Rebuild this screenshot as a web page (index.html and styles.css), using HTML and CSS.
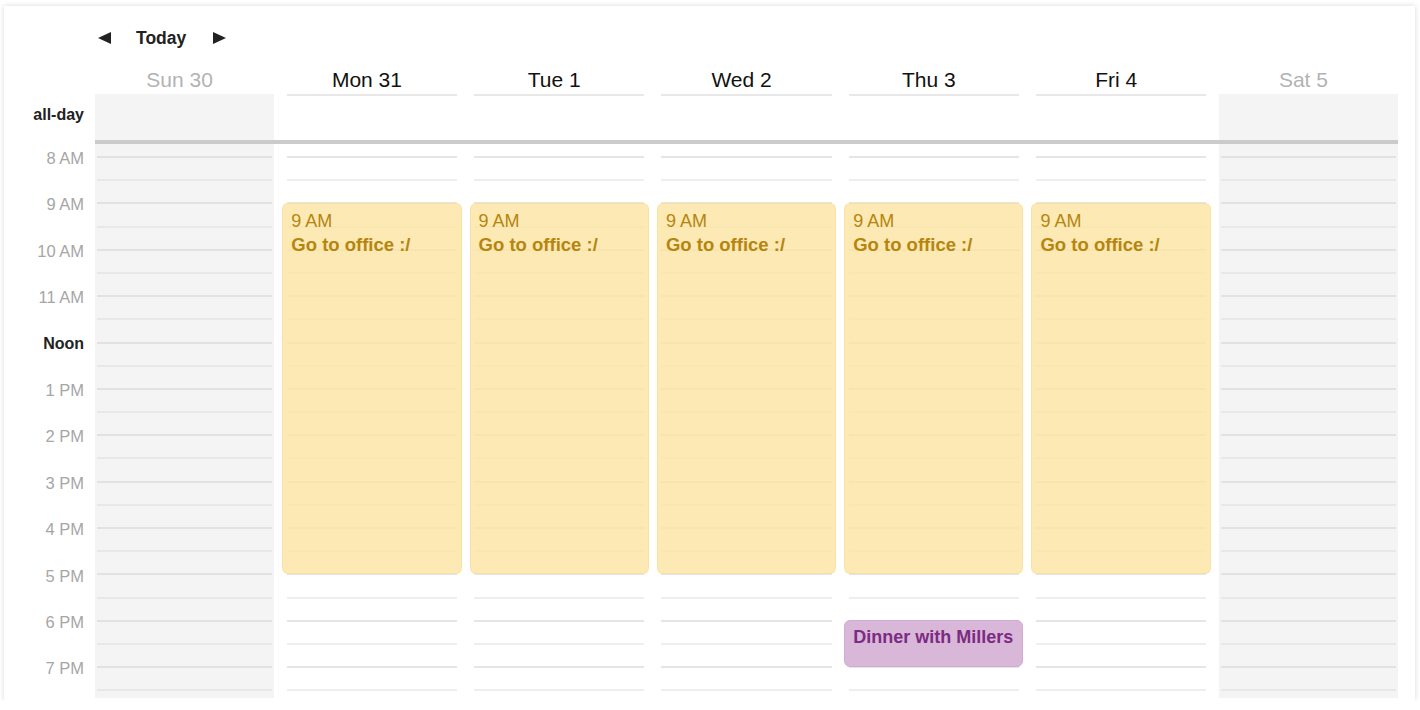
FILE: index.html
```html
<!DOCTYPE html>
<html lang="en">
<head>
<meta charset="utf-8">
<title>Week calendar</title>
<link rel="stylesheet" href="styles.css">
</head>
<body>
<div class="card">
  <div class="toolbar">
    <svg class="nav" width="13" height="12" viewBox="0 0 13 12"><path d="M0 6 L13 0 L13 12 Z" fill="#222"/></svg>
    <span class="today">Today</span>
    <svg class="nav" width="13" height="12" viewBox="0 0 13 12"><path d="M13 6 L0 0 L0 12 Z" fill="#222"/></svg>
  </div>
  <div class="cal">
    <div class="corner"></div>
    <div class="dh off">Sun 30</div>
    <div class="dh">Mon 31</div>
    <div class="dh">Tue 1</div>
    <div class="dh">Wed 2</div>
    <div class="dh">Thu 3</div>
    <div class="dh">Fri 4</div>
    <div class="dh off">Sat 5</div>

    <div class="adl">all-day</div>
    <div class="ad off"></div>
    <div class="ad"></div>
    <div class="ad"></div>
    <div class="ad"></div>
    <div class="ad"></div>
    <div class="ad"></div>
    <div class="ad off"></div>

    <div class="sepgut"></div>
    <div class="sep"></div>

    <div class="hours">
      <div class="hl">8 AM</div>
      <div class="hl">9 AM</div>
      <div class="hl">10 AM</div>
      <div class="hl">11 AM</div>
      <div class="hl noon">Noon</div>
      <div class="hl">1 PM</div>
      <div class="hl">2 PM</div>
      <div class="hl">3 PM</div>
      <div class="hl">4 PM</div>
      <div class="hl">5 PM</div>
      <div class="hl">6 PM</div>
      <div class="hl">7 PM</div>
    </div>

    <div class="col off">
      <div class="slot hr"></div><div class="slot"></div><div class="slot hr"></div><div class="slot"></div><div class="slot hr"></div><div class="slot"></div><div class="slot hr"></div><div class="slot"></div><div class="slot hr"></div><div class="slot"></div><div class="slot hr"></div><div class="slot"></div><div class="slot hr"></div><div class="slot"></div><div class="slot hr"></div><div class="slot"></div><div class="slot hr"></div><div class="slot"></div><div class="slot hr"></div><div class="slot"></div><div class="slot hr"></div><div class="slot"></div><div class="slot hr"></div><div class="slot"></div>
    </div>
    <div class="col">
      <div class="slot hr"></div><div class="slot"></div><div class="slot hr"></div><div class="slot"></div><div class="slot hr"></div><div class="slot"></div><div class="slot hr"></div><div class="slot"></div><div class="slot hr"></div><div class="slot"></div><div class="slot hr"></div><div class="slot"></div><div class="slot hr"></div><div class="slot"></div><div class="slot hr"></div><div class="slot"></div><div class="slot hr"></div><div class="slot"></div><div class="slot hr"></div><div class="slot"></div><div class="slot hr"></div><div class="slot"></div><div class="slot hr"></div><div class="slot"></div>
      <div class="ev work" style="top:58.6px;height:371.2px"><div class="time">9 AM</div><div class="title">Go to office :/</div></div>
    </div>
    <div class="col">
      <div class="slot hr"></div><div class="slot"></div><div class="slot hr"></div><div class="slot"></div><div class="slot hr"></div><div class="slot"></div><div class="slot hr"></div><div class="slot"></div><div class="slot hr"></div><div class="slot"></div><div class="slot hr"></div><div class="slot"></div><div class="slot hr"></div><div class="slot"></div><div class="slot hr"></div><div class="slot"></div><div class="slot hr"></div><div class="slot"></div><div class="slot hr"></div><div class="slot"></div><div class="slot hr"></div><div class="slot"></div><div class="slot hr"></div><div class="slot"></div>
      <div class="ev work" style="top:58.6px;height:371.2px"><div class="time">9 AM</div><div class="title">Go to office :/</div></div>
    </div>
    <div class="col">
      <div class="slot hr"></div><div class="slot"></div><div class="slot hr"></div><div class="slot"></div><div class="slot hr"></div><div class="slot"></div><div class="slot hr"></div><div class="slot"></div><div class="slot hr"></div><div class="slot"></div><div class="slot hr"></div><div class="slot"></div><div class="slot hr"></div><div class="slot"></div><div class="slot hr"></div><div class="slot"></div><div class="slot hr"></div><div class="slot"></div><div class="slot hr"></div><div class="slot"></div><div class="slot hr"></div><div class="slot"></div><div class="slot hr"></div><div class="slot"></div>
      <div class="ev work" style="top:58.6px;height:371.2px"><div class="time">9 AM</div><div class="title">Go to office :/</div></div>
    </div>
    <div class="col">
      <div class="slot hr"></div><div class="slot"></div><div class="slot hr"></div><div class="slot"></div><div class="slot hr"></div><div class="slot"></div><div class="slot hr"></div><div class="slot"></div><div class="slot hr"></div><div class="slot"></div><div class="slot hr"></div><div class="slot"></div><div class="slot hr"></div><div class="slot"></div><div class="slot hr"></div><div class="slot"></div><div class="slot hr"></div><div class="slot"></div><div class="slot hr"></div><div class="slot"></div><div class="slot hr"></div><div class="slot"></div><div class="slot hr"></div><div class="slot"></div>
      <div class="ev work" style="top:58.6px;height:371.2px"><div class="time">9 AM</div><div class="title">Go to office :/</div></div>
      <div class="ev dinner" style="top:475.6px;height:47.2px"><div class="title">Dinner with Millers</div></div>
    </div>
    <div class="col">
      <div class="slot hr"></div><div class="slot"></div><div class="slot hr"></div><div class="slot"></div><div class="slot hr"></div><div class="slot"></div><div class="slot hr"></div><div class="slot"></div><div class="slot hr"></div><div class="slot"></div><div class="slot hr"></div><div class="slot"></div><div class="slot hr"></div><div class="slot"></div><div class="slot hr"></div><div class="slot"></div><div class="slot hr"></div><div class="slot"></div><div class="slot hr"></div><div class="slot"></div><div class="slot hr"></div><div class="slot"></div><div class="slot hr"></div><div class="slot"></div>
      <div class="ev work" style="top:58.6px;height:371.2px"><div class="time">9 AM</div><div class="title">Go to office :/</div></div>
    </div>
    <div class="col off">
      <div class="slot hr"></div><div class="slot"></div><div class="slot hr"></div><div class="slot"></div><div class="slot hr"></div><div class="slot"></div><div class="slot hr"></div><div class="slot"></div><div class="slot hr"></div><div class="slot"></div><div class="slot hr"></div><div class="slot"></div><div class="slot hr"></div><div class="slot"></div><div class="slot hr"></div><div class="slot"></div><div class="slot hr"></div><div class="slot"></div><div class="slot hr"></div><div class="slot"></div><div class="slot hr"></div><div class="slot"></div><div class="slot hr"></div><div class="slot"></div>
    </div>
  </div>
</div>
</body>
</html>
```

FILE: styles.css
```css
* { box-sizing: border-box; }

body {
  margin: 0;
  background: #fff;
  font-family: "Liberation Sans", Arial, Helvetica, sans-serif;
  color: #222;
}

.card {
  margin: 6px 0 0 4px;
  width: 1411px;
  height: 694px;
  background: #fff;
  box-shadow: 0 0 5px rgba(0, 0, 0, 0.16);
  overflow: hidden;
}

.toolbar {
  display: flex;
  align-items: center;
  height: 54px;
  padding: 10px 0 0 94px;
}

.nav { display: block; }

.today {
  margin: 0 27px 0 25px;
  font-weight: bold;
  font-size: 17.5px;
  line-height: 20px;
  color: #222;
}

.cal {
  display: grid;
  grid-template-columns: 87px repeat(7, 187.3px);
  grid-template-rows: 34px 46px 4px 554px;
}

.dh {
  align-self: end;
  padding: 0 10px 2px 0;
  text-align: center;
  font-size: 21px;
  line-height: 24px;
  color: #111;
}
.dh.off { color: #b3b3b3; }

.adl {
  padding: 11px 7px 0 0;
  text-align: right;
  font-weight: bold;
  font-size: 16px;
  line-height: 20px;
  color: #222;
}

.ad {
  margin: 0 8.5px;
  border-top: 2px solid #e8e8e8;
}
.ad.off {
  margin: 0 4px;
  border-top: none;
  background: #f4f4f4;
}

.sep {
  grid-column: span 7;
  margin: 0 4px;
  background: #cbcbcb;
}

.hours {
  padding: 4px 7px 0 0;
  text-align: right;
}
.hl {
  height: 46.4px;
  font-size: 16.5px;
  line-height: 20px;
  color: #a6a6a6;
}
.hl.noon {
  color: #222;
  font-weight: bold;
  font-size: 16px;
}

.col {
  position: relative;
  margin: 0 4px;
  padding-top: 12px;
  overflow: hidden;
}
.col.off { background: #f4f4f4; }

.slot {
  height: 23.2px;
  margin: 0 4.5px;
  border-top: 2px solid #eeeeee;
}
.slot.hr { border-top-color: #e5e5e5; }
.col.off .slot { margin: 0 2px; border-top-color: #e8e8e8; }
.col.off .slot.hr { border-top-color: #e2e2e2; }

.ev {
  position: absolute;
  left: 0;
  right: 0;
  border-radius: 6px;
  padding: 5px 8px;
  font-size: 18px;
  line-height: 24px;
  white-space: nowrap;
  overflow: hidden;
}
.ev .title { font-weight: bold; font-size: 18.5px; }

.ev.work {
  background: rgba(252, 227, 160, 0.8);
  border: 1px solid rgba(245, 215, 140, 0.35);
  color: #b5850f;
}

.ev.dinner {
  padding-top: 4px;
  background: #d8b7d9;
  border: 1px solid #d0acd1;
  color: #7b2c82;
}
.ev.dinner .title { font-size: 18px; }
```
